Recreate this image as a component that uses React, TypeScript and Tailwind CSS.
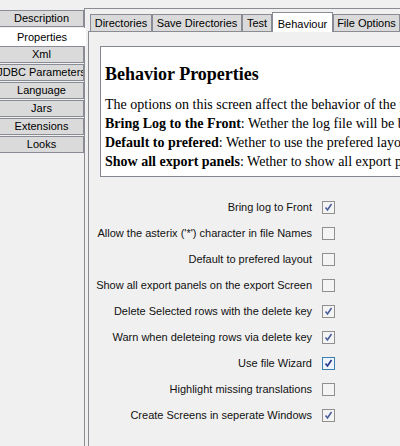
import React from "react";

const leftTabs = ["Description", "Properties", "Xml", "JDBC Parameters", "Language", "Jars", "Extensions", "Looks"];
const topTabs = [
  { label: "Directories", w: 62 },
  { label: "Save Directories", w: 90 },
  { label: "Test", w: 30 },
  { label: "Behaviour", w: 61 },
  { label: "File Options", w: 67 },
];
const options: { label: string; checked: boolean; focus?: boolean }[] = [
  { label: "Bring log to Front", checked: true },
  { label: "Allow the asterix ('*') character in file Names", checked: false },
  { label: "Default to prefered layout", checked: false },
  { label: "Show all export panels on the export Screen", checked: false },
  { label: "Delete Selected rows with the delete key", checked: true },
  { label: "Warn when deleteing rows via delete key", checked: true },
  { label: "Use file Wizard", checked: true, focus: true },
  { label: "Highlight missing translations", checked: false },
  { label: "Create Screens in seperate Windows", checked: true },
];

function Check({ checked, focus }: { checked: boolean; focus?: boolean }) {
  return (
    <div
      className={
        "w-[13px] h-[13px] border flex items-center justify-center " +
        (focus ? "border-[#3c7fb1] bg-[#eef4fb]" : "border-[#8f8f8f] bg-[#f4f4f4]")
      }
    >
      {checked && (
        <svg width="9" height="9" viewBox="0 0 9 9">
          <path
            d="M1.5 4.5 L3.5 7 L7.5 1"
            fill="none"
            stroke={focus ? "#21348b" : "#4d5d9e"}
            strokeWidth="1.6"
          />
        </svg>
      )}
    </div>
  );
}

export default function App() {
  return (
    <div
      className="w-[400px] h-[446px] bg-[#f0f0f0] overflow-hidden flex text-[11px] text-black"
      style={{ fontFamily: "'Liberation Sans', Arial, sans-serif" }}
    >
      {/* left tabs */}
      <div className="w-[84px] shrink-0 pt-[10px] flex flex-col relative z-10">
        {leftTabs.map((t) =>
          t === "Properties" ? (
            <div key={t} className="h-[18px] bg-white w-[86px] flex items-center justify-center leading-none pr-[2px]">
              {t}
            </div>
          ) : (
            <div
              key={t}
              className="h-[17px] mb-[1px] bg-[#dadada] border-y border-r border-[#898c95] flex items-center justify-center leading-none whitespace-nowrap overflow-hidden"
            >
              {t}
            </div>
          )
        )}
      </div>
      {/* outer content */}
      <div className="mt-[8px] border-l border-t border-[#8a8c92] w-[320px] shrink-0 h-[440px]">
        <div className="ml-[3px] mt-[2px]">
          {/* inner tabs */}
          <div className="flex items-end h-[20px] pl-[2px] relative z-10">
            {topTabs.map((t) =>
              t.label === "Behaviour" ? (
                <div
                  key={t.label}
                  style={{ width: t.w }}
                  className="h-[20px] -mb-[1px] bg-white border-t border-x border-[#898c95] flex items-start pt-[3px] justify-center whitespace-nowrap shrink-0"
                >
                  {t.label}
                </div>
              ) : (
                <div
                  key={t.label}
                  style={{ width: t.w }}
                  className="h-[17px] bg-[#dadada] border-t border-l border-r border-[#898c95] flex items-center justify-center whitespace-nowrap shrink-0"
                >
                  {t.label}
                </div>
              )
            )}
          </div>
          <div className="border-l border-t border-[#8a8c92] h-[420px] pl-[11px] pt-[14px]">
            <div
              className="bg-white border border-[#828790] w-[330px] h-[131px] pl-[4px] pt-[17px] whitespace-nowrap overflow-hidden"
              style={{ fontFamily: "'Liberation Serif', 'Times New Roman', serif" }}
            >
              <div className="text-[18px] font-bold leading-[21px]">Behavior Properties</div>
              <div className="mt-[10px] text-[14px] leading-[19px]">
                <div>The options on this screen affect the behavior of the program</div>
                <div>
                  <b>Bring Log to the Front</b>: Wether the log file will be brought to the front
                </div>
                <div>
                  <b>Default to prefered</b>: Wether to use the prefered layout
                </div>
                <div>
                  <b>Show all export panels</b>: Wether to show all export panels
                </div>
              </div>
            </div>
            <div className="mt-[17px] flex flex-col">
              {options.map((o) => (
                <div key={o.label} className="h-[26px] flex items-center">
                  <div className="w-[223px] -ml-[11px] text-right whitespace-nowrap text-[#111]">{o.label}</div>
                  <div className="ml-[10px]">
                    <Check checked={o.checked} focus={o.focus} />
                  </div>
                </div>
              ))}
            </div>
          </div>
        </div>
      </div>
    </div>
  );
}
